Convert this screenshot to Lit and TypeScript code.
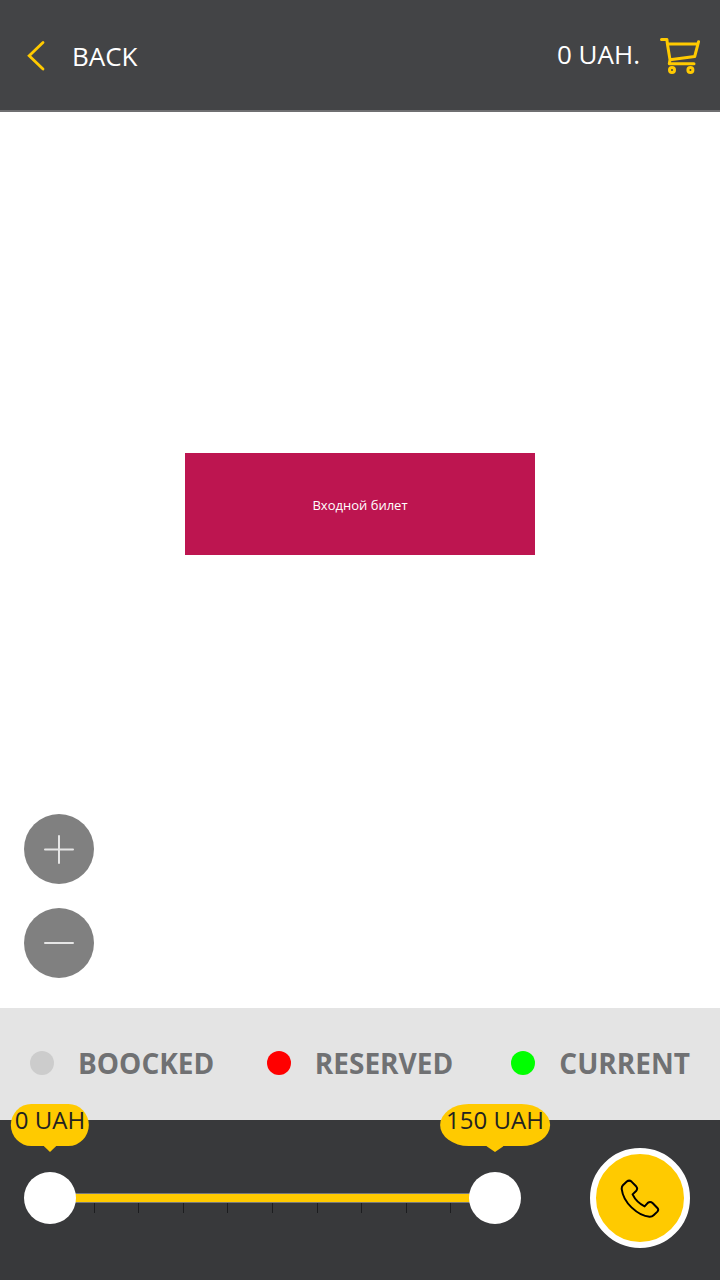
import { LitElement, html, css, svg } from "lit";
import { customElement, state } from "lit/decorators.js";

const FONT = css`"Open Sans", "Noto Sans", sans-serif`;

@customElement("top-bar")
class TopBar extends LitElement {
  static styles = css`
    :host {
      display: flex;
      align-items: center;
      justify-content: space-between;
      box-sizing: border-box;
      height: 112px;
      padding: 0 20px 0 24px;
      background: #434446;
      border-bottom: 2px solid #6f6f71;
      font: 26px/36px ${FONT};
    }
    a {
      display: flex;
      align-items: center;
      color: #fff;
      text-decoration: none;
    }
    .back {
      gap: 24px;
    }
    .back span {
      padding-top: 2px;
    }
    .cart {
      gap: 20px;
    }
    .cart span {
      padding-bottom: 2px;
    }
    svg {
      display: block;
      fill: none;
      stroke: #ffca00;
    }
  `;

  render() {
    return html`
      <a class="back" href="#back">
        <svg width="24" height="32" viewBox="0 0 24 32" stroke-width="2.8" stroke-linecap="round">
          <path d="M19 3.5L5.2 16.8L19 30" />
        </svg>
        <span>BACK</span>
      </a>
      <a class="cart" href="#cart">
        <span>0 UAH.</span>
        <svg
          width="40"
          height="38"
          viewBox="0 0 40 38"
          stroke-width="3"
          stroke-linejoin="round"
          stroke-linecap="round"
          role="img"
          aria-label="Cart"
        >
          <path d="M1.5 3.5H6.9L7.4 8H37.6M38.5 5.8L34.7 20.5L10 23.8M7.4 8L10 23.8L9.3 27.7H34" />
          <circle cx="12" cy="34" r="2.5" />
          <circle cx="30.4" cy="34" r="2.5" />
        </svg>
      </a>
    `;
  }
}

@customElement("hall-map")
class HallMap extends LitElement {
  static styles = css`
    :host {
      position: relative;
      display: grid;
      place-items: center;
      padding-bottom: 112px;
      background: #fff;
    }
    .sector {
      width: 350px;
      height: 102px;
      padding: 2px 0 0;
      border: 0;
      background: #bd1550;
      color: #fff;
      font: 13px/18px ${FONT};
    }
    .zoom {
      position: absolute;
      left: 24px;
      bottom: 30px;
      display: grid;
      gap: 24px;
    }
    .zoom button {
      display: grid;
      place-items: center;
      width: 70px;
      height: 70px;
      padding: 0;
      border: 0;
      border-radius: 50%;
      background: #808080;
    }
    svg {
      display: block;
      stroke: #e6e6e6;
      stroke-width: 2;
      stroke-linecap: round;
    }
  `;

  render() {
    const glyph = (d: string) => html`
      <svg width="30" height="30" viewBox="0 0 30 30">${svg`<path d=${d} />`}</svg>
    `;
    return html`
      <button class="sector">Входной билет</button>
      <div class="zoom">
        <button aria-label="Zoom in">${glyph("M1 15.5H29M15 2V29")}</button>
        <button aria-label="Zoom out">${glyph("M1 15H29")}</button>
      </div>
    `;
  }
}

@customElement("seat-legend")
class SeatLegend extends LitElement {
  static styles = css`
    ul {
      display: grid;
      grid-template-columns: 1fr auto 1fr;
      align-items: center;
      box-sizing: border-box;
      height: 112px;
      margin: 0;
      padding: 0 30px 2px;
      list-style: none;
      background: #e4e4e4;
      color: #707173;
      font: bold 28px/38px ${FONT};
    }
    li {
      display: flex;
      align-items: center;
      gap: 24px;
    }
    li:last-child {
      justify-content: flex-end;
    }
    .dot {
      width: 24px;
      height: 24px;
      border-radius: 50%;
    }
    .booked {
      background: #cccccc;
    }
    .reserved {
      background: #ff0000;
    }
    .current {
      background: #00ff00;
    }
  `;

  render() {
    return html`
      <ul>
        <li><span class="dot booked"></span>BOOCKED</li>
        <li><span class="dot reserved"></span>RESERVED</li>
        <li><span class="dot current"></span>CURRENT</li>
      </ul>
    `;
  }
}

@customElement("price-range")
class PriceRange extends LitElement {
  static styles = css`
    :host {
      position: relative;
      display: grid;
      align-items: center;
      height: 52px;
    }
    .scale,
    input {
      grid-area: 1 / 1;
    }
    .scale {
      margin: 0 26px;
      padding-top: 10px;
    }
    .track {
      height: 8px;
      border: 1px solid #77797a;
      border-width: 1px 0;
      background: #ffca00;
    }
    .ticks {
      display: flex;
      justify-content: space-evenly;
    }
    .tick {
      width: 1px;
      height: 10px;
      background: #1c1d1f;
    }
    input {
      appearance: none;
      width: 100%;
      height: 52px;
      margin: 0;
      background: transparent;
      pointer-events: none;
    }
    input::-webkit-slider-thumb {
      appearance: none;
      width: 52px;
      height: 52px;
      border: 0;
      border-radius: 50%;
      background: #fff;
      pointer-events: auto;
    }
    .bubbles {
      position: absolute;
      inset: 0 26px;
      pointer-events: none;
    }
    .bubble {
      position: absolute;
      bottom: 78px;
      box-sizing: border-box;
      height: 42px;
      padding: 0 4px;
      border-radius: 26% / 50%;
      background: #ffca00;
      color: #222;
      font: 24px/32px ${FONT};
      white-space: nowrap;
      transform: translateX(-50%);
    }
    .bubble.wide {
      padding: 0 6px;
    }
    .bubble::after {
      content: "";
      position: absolute;
      top: 100%;
      left: 50%;
      width: 16%;
      height: 6px;
      background: #ffca00;
      clip-path: polygon(0 0, 100% 0, 50% 100%);
      transform: translateX(-50%);
    }
  `;

  @state() private low = 0;
  @state() private high = 150;
  private max = 150;

  private bubble(value: number) {
    return html`
      <output class="bubble ${value > 99 ? "wide" : ""}" style="left: ${(value / this.max) * 100}%"
        >${value} UAH</output
      >
    `;
  }

  render() {
    return html`
      <div class="scale">
        <div class="track"></div>
        <div class="ticks">${Array.from({ length: 9 }, () => html`<span class="tick"></span>`)}</div>
      </div>
      <input
        type="range"
        aria-label="Minimum price"
        min="0"
        max=${this.max}
        .value=${String(this.low)}
        @input=${(e: Event) => (this.low = Number((e.target as HTMLInputElement).value))}
      />
      <input
        type="range"
        aria-label="Maximum price"
        min="0"
        max=${this.max}
        .value=${String(this.high)}
        @input=${(e: Event) => (this.high = Number((e.target as HTMLInputElement).value))}
      />
      <div class="bubbles">${this.bubble(this.low)}${this.bubble(this.high)}</div>
    `;
  }
}

@customElement("app-root")
class AppRoot extends LitElement {
  static styles = css`
    :host {
      display: flex;
      flex-direction: column;
      min-height: 100vh;
    }
    hall-map {
      flex: 1;
    }
    footer {
      display: flex;
      align-items: center;
      gap: 69px;
      padding: 28px 30px 32px 24px;
      background: #38393b;
    }
    price-range {
      flex: 1;
    }
    .call {
      display: grid;
      place-items: center;
      width: 100px;
      height: 100px;
      padding: 0;
      border: 6px solid #fff;
      border-radius: 50%;
      background: #ffca00;
    }
    svg {
      display: block;
      fill: none;
      stroke: #000;
      stroke-width: 2;
      stroke-linejoin: round;
    }
  `;

  render() {
    return html`
      <top-bar></top-bar>
      <hall-map></hall-map>
      <seat-legend></seat-legend>
      <footer>
        <price-range></price-range>
        <button class="call" aria-label="Call">
          <svg width="40" height="40" viewBox="0 -1 40 40">
            <path
              d="M6.8 2.6L2.9 6.3Q1.4 7.9 1.8 10.5C2.6 17 6.2 23.2 11.5 28.4C17 33.6 23.5 37.4 29.5 37.8Q32 37.9 33.6 36.3L37.4 32.6Q39 30.8 37.4 29L32.8 24.2Q30.3 22 27.8 23.9L24.6 27.4C19.5 24.8 15 20.5 12.6 15.4L16.1 12Q18.2 9.6 16.1 7.3L11.5 2.6Q9.2 .6 6.8 2.6Z"
            />
          </svg>
        </button>
      </footer>
    `;
  }
}
